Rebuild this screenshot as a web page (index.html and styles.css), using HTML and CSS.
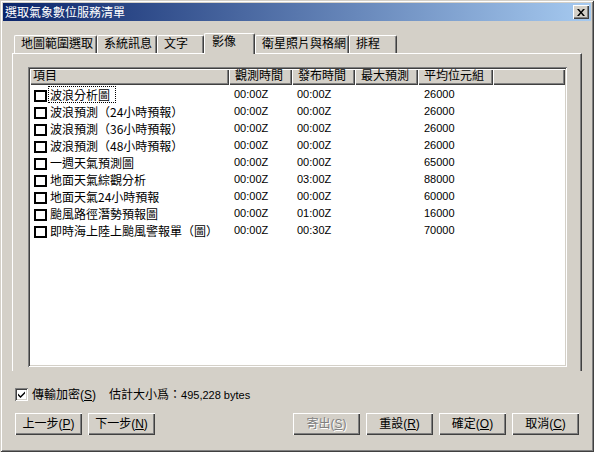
FILE: index.html
```html
<!DOCTYPE html>
<html lang="zh-Hant">
<head>
<meta charset="utf-8">
<title>選取氣象數位服務清單</title>
<link rel="stylesheet" href="styles.css">
</head>
<body>
<div class="window">
  <div class="titlebar">
    <span class="title">選取氣象數位服務清單</span>
    <div class="close-btn">
      <svg width="8" height="7" viewBox="0 0 8 7"><path d="M0 0h2l2 2.4 2-2.4h2l-3 3.5 3 3.5h-2l-2-2.4-2 2.4h-2l3-3.5z" fill="#000"/></svg>
    </div>
  </div>
  <div class="main">
    <div class="tabs">
      <div class="tab w1">地圖範圍選取</div>
      <div class="tab w2">系統訊息</div>
      <div class="tab w3">文字</div>
      <div class="tab w4 selected">影像</div>
      <div class="tab w5">衛星照片與格網</div>
      <div class="tab w6">排程</div>
    </div>
    <div class="panel">
      <div class="listbox">
        <div class="header">
          <div class="hcell c1">項目</div>
          <div class="hcell c2">觀測時間</div>
          <div class="hcell c3">發布時間</div>
          <div class="hcell c4">最大預測</div>
          <div class="hcell c5">平均位元組</div>
          <div class="hcell filler"></div>
        </div>
        <div class="rows">
          <div class="row"><div class="cell c1"><span class="cb"></span><span class="label focus">波浪分析圖</span></div><div class="cell c2 num">00:00Z</div><div class="cell c3 num">00:00Z</div><div class="cell c4"></div><div class="cell c5 num">26000</div></div>
          <div class="row"><div class="cell c1"><span class="cb"></span><span class="label">波浪預測（24小時預報）</span></div><div class="cell c2 num">00:00Z</div><div class="cell c3 num">00:00Z</div><div class="cell c4"></div><div class="cell c5 num">26000</div></div>
          <div class="row"><div class="cell c1"><span class="cb"></span><span class="label">波浪預測（36小時預報）</span></div><div class="cell c2 num">00:00Z</div><div class="cell c3 num">00:00Z</div><div class="cell c4"></div><div class="cell c5 num">26000</div></div>
          <div class="row"><div class="cell c1"><span class="cb"></span><span class="label">波浪預測（48小時預報）</span></div><div class="cell c2 num">00:00Z</div><div class="cell c3 num">00:00Z</div><div class="cell c4"></div><div class="cell c5 num">26000</div></div>
          <div class="row"><div class="cell c1"><span class="cb"></span><span class="label">一週天氣預測圖</span></div><div class="cell c2 num">00:00Z</div><div class="cell c3 num">00:00Z</div><div class="cell c4"></div><div class="cell c5 num">65000</div></div>
          <div class="row"><div class="cell c1"><span class="cb"></span><span class="label">地面天氣綜觀分析</span></div><div class="cell c2 num">00:00Z</div><div class="cell c3 num">03:00Z</div><div class="cell c4"></div><div class="cell c5 num">88000</div></div>
          <div class="row"><div class="cell c1"><span class="cb"></span><span class="label">地面天氣24小時預報</span></div><div class="cell c2 num">00:00Z</div><div class="cell c3 num">00:00Z</div><div class="cell c4"></div><div class="cell c5 num">60000</div></div>
          <div class="row"><div class="cell c1"><span class="cb"></span><span class="label">颱風路徑潛勢預報圖</span></div><div class="cell c2 num">00:00Z</div><div class="cell c3 num">01:00Z</div><div class="cell c4"></div><div class="cell c5 num">16000</div></div>
          <div class="row"><div class="cell c1"><span class="cb"></span><span class="label">即時海上陸上颱風警報單（圖）</span></div><div class="cell c2 num">00:00Z</div><div class="cell c3 num">00:30Z</div><div class="cell c4"></div><div class="cell c5 num">70000</div></div>
        </div>
      </div>
    </div>
    <div class="options">
      <span class="check">
        <svg width="7" height="7" viewBox="0 0 7 7"><path d="M0 2.5l2.5 2.5 4.5-4.5v2l-4.5 4.5-2.5-2.5z" fill="#000"/></svg>
      </span>
      <span class="opt-label">傳輸加密(<u>S</u>)</span>
      <span class="size">估計大小爲：<span class="num">495,228 bytes</span></span>
    </div>
    <div class="buttons">
      <div class="btn">上一步(<u>P</u>)</div>
      <div class="btn">下一步(<u>N</u>)</div>
      <div class="spacer"></div>
      <div class="btn disabled">寄出(<u>S</u>)</div>
      <div class="btn">重設(<u>R</u>)</div>
      <div class="btn">確定(<u>O</u>)</div>
      <div class="btn">取消(<u>C</u>)</div>
    </div>
  </div>
</div>
</body>
</html>
```

FILE: styles.css
```css
* { box-sizing: border-box; margin: 0; padding: 0; }
html, body { width: 594px; height: 452px; overflow: hidden; }
body {
  font: 12px/1 "Liberation Sans", "Noto Sans CJK TC", sans-serif;
  color: #000;
  background: #d4d0c8;
}
.window {
  width: 594px;
  height: 452px;
  padding: 3px;
  background: #d4d0c8;
  display: flex;
  flex-direction: column;
  box-shadow: inset 1px 1px #d4d0c8, inset -1px -1px #404040, inset 2px 2px #fff, inset -2px -2px #808080;
}
.titlebar {
  height: 18px;
  display: flex;
  align-items: center;
  justify-content: space-between;
  padding: 0 2px;
  background: linear-gradient(to right, #0a246a, #a6caf0);
}
.title {
  color: #fff;
  font-size: 12px;
  line-height: 18px;
  font-family: "Noto Sans CJK TC", sans-serif;
}
.close-btn {
  width: 16px;
  height: 14px;
  background: #d4d0c8;
  display: flex;
  align-items: center;
  justify-content: center;
  box-shadow: inset 1px 1px #fff, inset -1px -1px #404040, inset -2px -2px #808080;
}
.close-btn svg { display: block; margin-top: 0; }
.main {
  flex: 1;
  display: flex;
  flex-direction: column;
  padding: 0 9px;
}
.tabs {
  margin-top: 12px;
  height: 20px;
  display: flex;
  align-items: flex-end;
  padding-left: 2px;
}
.tab {
  height: 18px;
  padding-left: 6px;
  line-height: 17px;
  white-space: nowrap;
  background: #d4d0c8;
  border-top: 1px solid #fff;
  border-left: 1px solid #fff;
  border-right: 1px solid #404040;
  box-shadow: inset -1px 0 #808080;
  border-radius: 2px 2px 0 0;
}
.tab.selected {
  height: 21px;
  margin-bottom: -1px;
  padding-left: 7px;
  position: relative;
  z-index: 1;
}
.w1 { width: 83px; }
.w2 { width: 60px; }
.w3 { width: 47px; }
.w4 { width: 51px; }
.w5 { width: 94px; }
.w6 { width: 48px; }
.panel {
  height: 318px;
  border-top: 1px solid #fff;
  border-left: 1px solid #fff;
  border-right: 1px solid #404040;
  box-shadow: inset -1px 0 #808080;
  padding: 13px 14px 0 15px;
}
.listbox {
  height: 300px;
  background: #fff;
  padding: 2px;
  overflow: hidden;
  box-shadow: inset 1px 1px #808080, inset -1px -1px #fff, inset 2px 2px #404040, inset -2px -2px #d4d0c8;
}
.header {
  display: flex;
  height: 16px;
  background: #d4d0c8;
}
.hcell {
  height: 16px;
  line-height: 15px;
  padding-left: 6px;
  white-space: nowrap;
  box-shadow: inset 1px 1px #fff, inset -1px -1px #404040, inset -2px -2px #808080;
}
.hcell.c1 { padding-left: 3px; }
.c1 { width: 199px; }
.c2, .c3, .c4 { width: 63px; }
.c5 { width: 75px; }
.filler { flex: 1; }
.rows { padding-top: 1px; }
.row {
  display: flex;
  height: 17px;
  align-items: center;
}
.cell {
  height: 17px;
  line-height: 17px;
  padding-left: 5px;
  white-space: nowrap;
}
.cell.c1 {
  padding-left: 4px;
  display: flex;
  align-items: center;
}
.cell.c5 { padding-left: 6px; }
.num { font-size: 11px; }
.cb {
  width: 13px;
  height: 12px;
  border: 2px solid #000;
  background: #fff;
  margin-top: 2px;
  flex: none;
}
.label {
  margin-left: 1px;
  height: 17px;
  line-height: 17px;
  padding: 0 5px 0 1px;
  border: 1px dotted transparent;
  line-height: 15px;
  font-family: "Noto Sans CJK TC", sans-serif;
}
.label.focus { border-color: #000; }
.options {
  margin-top: 17px;
  height: 13px;
  display: flex;
  align-items: center;
  padding-left: 3px;
}
.check {
  width: 13px;
  height: 13px;
  background: #fff;
  display: flex;
  align-items: center;
  justify-content: center;
  box-shadow: inset 1px 1px #808080, inset -1px -1px #fff, inset 2px 2px #404040, inset -2px -2px #d4d0c8;
}
.opt-label { margin-left: 4px; }
.size { margin-left: 13px; }
.buttons {
  margin-top: 12px;
  display: flex;
  gap: 6px;
  padding: 0 3px;
}
.spacer { flex: 1; }
.btn {
  width: 67px;
  height: 22px;
  line-height: 22px;
  text-align: center;
  background: #d4d0c8;
  white-space: nowrap;
  box-shadow: inset 1px 1px #fff, inset -1px -1px #404040, inset -2px -2px #808080;
}
.btn.disabled {
  color: #808080;
  text-shadow: 1px 1px #fff;
}
u { text-decoration: underline; text-underline-offset: 1px; }
```
